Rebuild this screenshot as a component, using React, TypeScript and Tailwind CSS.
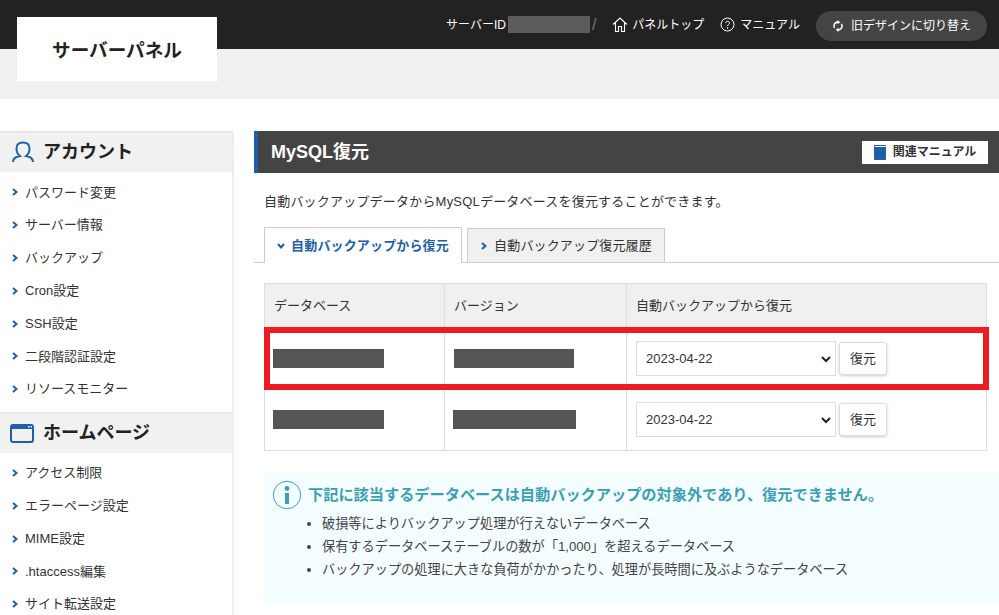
import React from "react";

const Chev = ({ down = false, className = "" }: { down?: boolean; className?: string }) => (
  <svg width="8" height="8" viewBox="0 0 8 8" className={className} style={{ transform: down ? "rotate(90deg)" : undefined }}>
    <path d="M2 1 L5.5 4 L2 7" fill="none" stroke="#1f5fa8" strokeWidth="2" />
  </svg>
);

const Item = ({ t }: { t: string }) => (
  <li className="flex h-[32.8px] items-center pl-[11px] text-[13px] text-[#333]">
    <Chev className="mr-[6px]" />
    {t}
  </li>
);

const Gray = ({ w }: { w: string }) => <div className={`h-[19px] bg-[#555] ${w}`} />;

const DateCell = () => (
  <td className="border border-[#ddd] pl-[9px]">
    <div className="flex items-center gap-[3px]">
      <div className="flex h-[35px] w-[200px] items-center justify-between border border-[#ddd] bg-white pl-[9px] pr-[3px] pt-[1px] text-[13px] text-[#333]">
        <span>2023-04-22</span>
        <svg width="12" height="10" viewBox="0 0 12 10">
          <path d="M2 3 L6 7 L10 3" fill="none" stroke="#222" strokeWidth="2" />
        </svg>
      </div>
      <button className="flex h-[33px] w-[48px] items-center justify-center rounded-[3px] border border-[#ddd] bg-white text-[13px] text-[#333] shadow-[0_1px_3px_rgba(0,0,0,0.2)]">
        復元
      </button>
    </div>
  </td>
);

export default function App() {
  return (
    <div className="relative h-[615px] w-[999px] overflow-hidden bg-white font-['Liberation_Sans','Noto_Sans_CJK_JP',sans-serif] text-[#333]">
      <header className="flex h-[49px] items-center justify-end bg-[#222] pr-[12px] text-[12px] text-white">
        <span>サーバーID</span>
        <div className="ml-[2px] h-[17px] w-[82px] bg-[#5c5c5c]" />
        <span className="ml-[2px] text-[#777] text-[16px]">/</span>
        <svg className="ml-[16px]" width="16" height="17" viewBox="0 0 16 17" fill="none" stroke="white" strokeWidth="1.1">
          <path d="M1 8.5 L8 2 L15 8.5 M3.5 7 V15.5 H6.5 V10.5 H9.5 V15.5 H12.5 V7" />
        </svg>
        <span className="ml-[4px]">パネルトップ</span>
        <svg className="ml-[16px]" width="15" height="15" viewBox="0 0 15 15" fill="none" stroke="white" strokeWidth="1">
          <circle cx="7.5" cy="7.5" r="6.5" />
          <path d="M5.7 6 C5.7 3.7 9.5 3.7 9.5 6 C9.5 7.5 7.5 7.5 7.5 9" />
          <circle cx="7.5" cy="11" r="0.4" />
        </svg>
        <span className="ml-[5px]">マニュアル</span>
        <div className="ml-[16px] mt-[3px] flex h-[30px] w-[171px] items-center justify-center gap-[7px] rounded-full bg-[#444]">
          <svg width="12" height="14" viewBox="0 0 14 14" fill="none" stroke="white" strokeWidth="1.8">
            <path d="M3 9.5 A4.5 4.5 0 0 1 7 2.5 M11 4.5 A4.5 4.5 0 0 1 7 11.5" />
            <path d="M6.5 0 L9.5 2.5 L6.5 5 Z M7.5 9 L4.5 11.5 L7.5 14 Z" fill="white" stroke="none" />
          </svg>
          旧デザインに切り替え
        </div>
      </header>

      <div className="flex h-[50px] items-start bg-[#f0f0f0] pl-[17px]">
        <div className="-mt-[32px] flex h-[64px] w-[200px] shrink-0 items-center justify-center bg-white pt-[3px] text-[18.6px] font-bold text-[#222]">
          サーバーパネル
        </div>
      </div>

      <div className="mt-[32px] flex">
        <aside className="w-[234px] shrink-0 border-r-2 border-[#eee]">
          <div className="flex h-[41px] items-center border-t-2 border-[#e8e8e8] bg-[#f1f1f1] pl-[12px] text-[18px] font-bold text-[#222]">
            <svg width="22" height="23" viewBox="0 0 22 23" fill="none" stroke="#1f5fa8" strokeWidth="2" className="mr-[9px]">
              <path d="M1 21 C1 17 4 16 8 15 C5 13 4.5 10 4.5 7.5 C4.5 3.5 7 1.5 11 1.5 C15 1.5 17.5 3.5 17.5 7.5 C17.5 10 17 13 14 15 C18 16 21 17 21 21" />
            </svg>
            アカウント
          </div>
          <ul className="mt-[4px]">
            {["パスワード変更", "サーバー情報", "バックアップ", "Cron設定", "SSH設定", "二段階認証設定", "リソースモニター"].map((t) => (
              <Item key={t} t={t} />
            ))}
          </ul>
          <div className="mt-[6px] flex h-[41px] items-center border-t-2 border-[#e8e8e8] bg-[#f1f1f1] pl-[10px] text-[18px] font-bold text-[#222]">
            <svg width="24" height="19" viewBox="0 0 24 19" className="mr-[9px]">
              <rect x="1" y="1" width="22" height="17" rx="2" fill="none" stroke="#1f5fa8" strokeWidth="2" />
              <rect x="1" y="1" width="22" height="4" fill="#1f5fa8" />
              <rect x="18" y="2" width="1.5" height="1.5" fill="white" />
              <rect x="20.5" y="2" width="1.5" height="1.5" fill="white" />
            </svg>
            ホームページ
          </div>
          <ul className="mt-[4px]">
            {["アクセス制限", "エラーページ設定", "MIME設定", ".htaccess編集", "サイト転送設定"].map((t) => (
              <Item key={t} t={t} />
            ))}
          </ul>
        </aside>

        <main className="ml-[20px] min-w-0 flex-1">
          <div className="flex h-[42px] items-center justify-between border-l-[4px] border-[#1f5fa8] bg-[#444] pl-[13px] pr-[11px]">
            <span className="text-[18px] font-bold text-white">MySQL復元</span>
            <div className="flex h-[23px] w-[126px] items-center justify-center gap-[7px] bg-white text-[12px] font-bold text-[#333]">
              <svg width="12" height="15" viewBox="0 0 12 15">
                <rect x="0" y="0" width="12" height="15" rx="1" fill="#1f5fa8" />
                <path d="M1 1.5 H12" stroke="white" strokeWidth="1" />
              </svg>
              関連マニュアル
            </div>
          </div>

          <p className="ml-[10px] mt-[19px] text-[13px] leading-[20px] tracking-[0.2px]">
            自動バックアップデータからMySQLデータベースを復元することができます。
          </p>

          <div className="mt-[15px] flex h-[36px] items-end border-b border-[#ccc] pl-[10px]">
            <div className="-mb-px flex h-[36px] w-[198px] items-center justify-center gap-[6px] border border-b-0 border-[#ccc] bg-white text-[13px] font-bold tracking-[0.15px] text-[#1f5fa8]">
              <Chev down />
              自動バックアップから復元
            </div>
            <div className="ml-[5px] flex h-[34px] w-[198px] items-center justify-center gap-[6px] border border-b-0 border-[#ccc] bg-[#f0f0f0] text-[13px] tracking-[0.15px]">
              <Chev />
              自動バックアップ復元履歴
            </div>
          </div>

          <div className="relative ml-[10px] mt-[20px] w-[723px]">
            <table className="w-full table-fixed border-collapse text-[13px]">
              <colgroup>
                <col className="w-[180px]" />
                <col className="w-[182px]" />
                <col />
              </colgroup>
              <tbody>
                <tr className="h-[45px] bg-[#f0f0f0]">
                  <td className="border border-[#ddd] pl-[9px]">データベース</td>
                  <td className="border border-[#ddd] pl-[9px]">バージョン</td>
                  <td className="border border-[#ddd] pl-[9px]">自動バックアップから復元</td>
                </tr>
                <tr className="h-[60px]">
                  <td className="border border-[#ddd] pl-[8px]"><Gray w="w-[111px]" /></td>
                  <td className="border border-[#ddd] pl-[9px]"><Gray w="w-[120px]" /></td>
                  <DateCell />
                </tr>
                <tr className="h-[62px]">
                  <td className="border border-[#ddd] pl-[8px]"><Gray w="w-[111px]" /></td>
                  <td className="border border-[#ddd] pl-[8px]"><Gray w="w-[123px]" /></td>
                  <DateCell />
                </tr>
              </tbody>
            </table>
            <div className="absolute left-0 top-[44px] h-[63px] w-[725px] border-[6px] border-[#ed1c24]" />
          </div>

          <div className="ml-[10px] mt-[21px] h-[131px] w-[735px] bg-[#f4fdff] pl-[8px] pt-[8px]">
            <div className="flex items-center gap-[6px] text-[15.2px] font-bold text-[#3a9fb5]">
              <svg width="30" height="30" viewBox="0 0 30 30">
                <circle cx="15" cy="15" r="13.7" fill="none" stroke="#3a9fb5" strokeWidth="1" />
                <circle cx="15" cy="8.5" r="2.4" fill="#3a9fb5" />
                <rect x="13" y="13" width="4" height="11" fill="#3a9fb5" />
              </svg>
              下記に該当するデータベースは自動バックアップの対象外であり、復元できません。
            </div>
            <ul className="ml-[30px] mt-[2px] list-disc pl-[20px] text-[13.2px] leading-[23px] text-[#444] [text-spacing-trim:space-all]">
              <li>破損等によりバックアップ処理が行えないデータベース</li>
              <li>保有するデータベーステーブルの数が「1,000」を超えるデータベース</li>
              <li>バックアップの処理に大きな負荷がかかったり、処理が長時間に及ぶようなデータベース</li>
            </ul>
          </div>
        </main>
      </div>
    </div>
  );
}
